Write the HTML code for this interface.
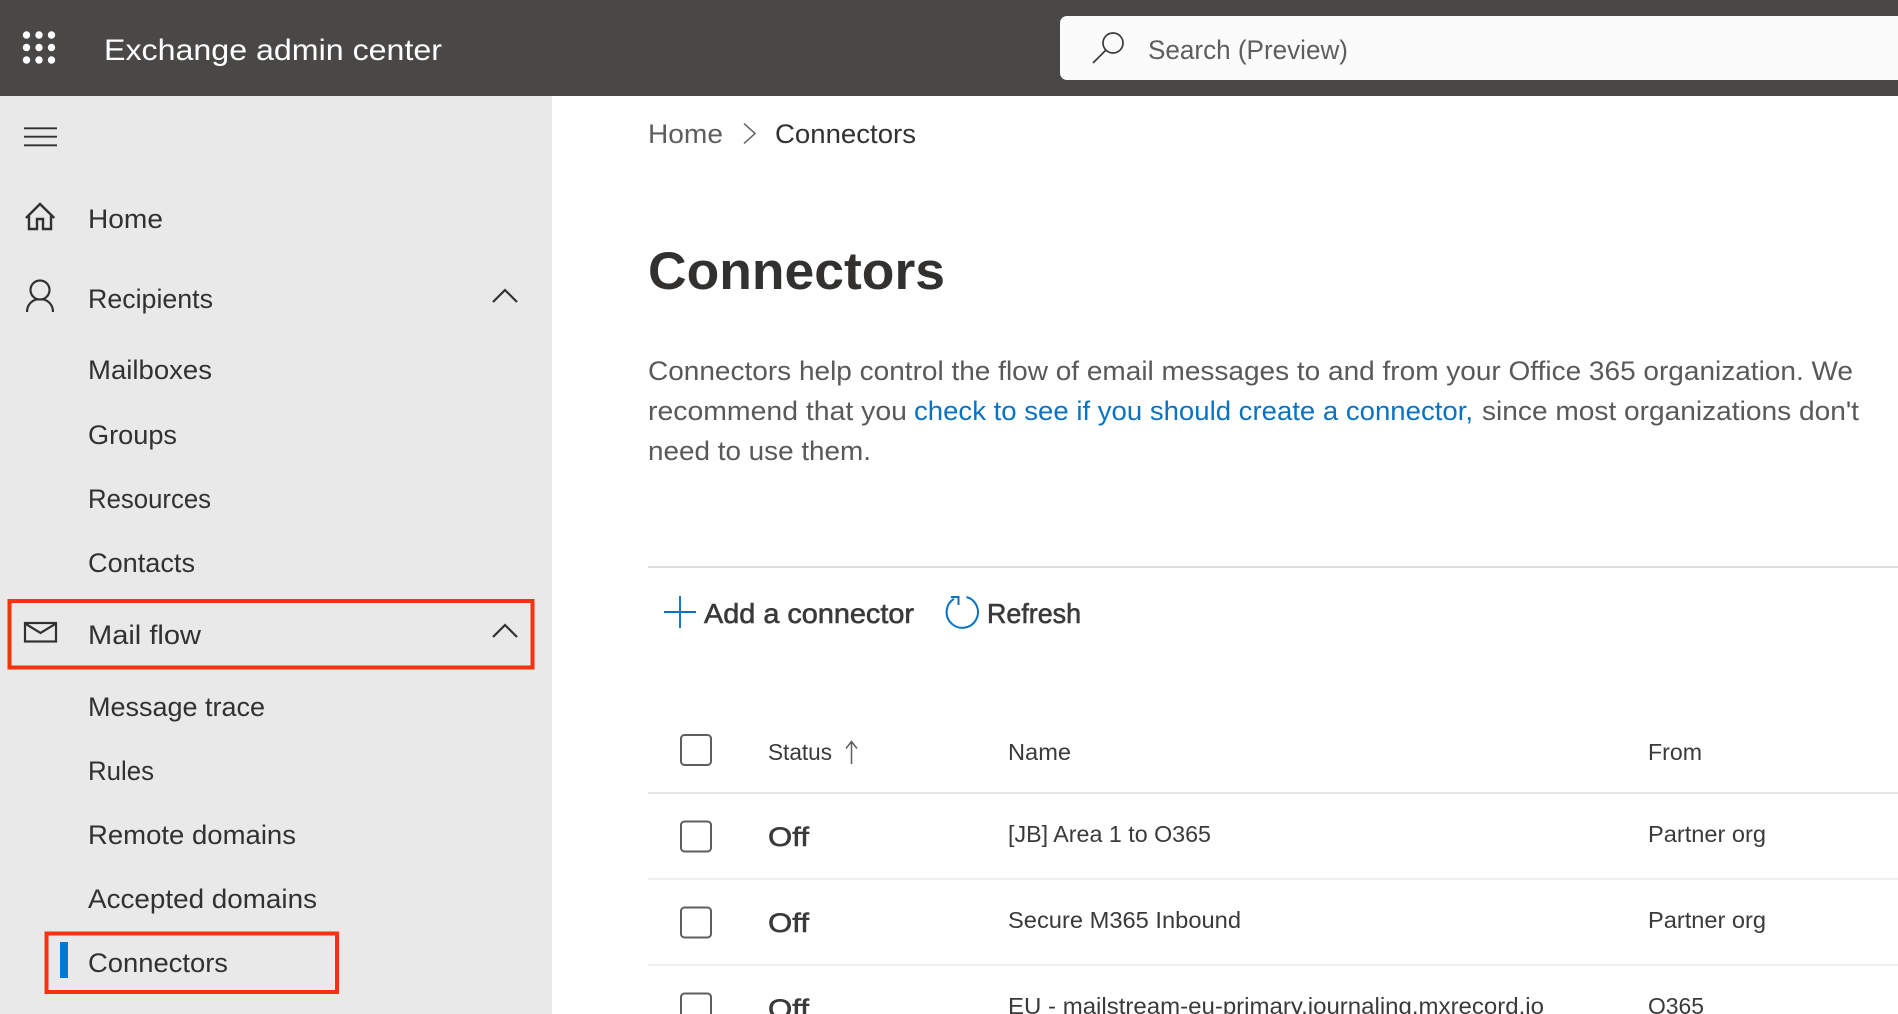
<!DOCTYPE html>
<html lang="en">
<head>
<meta charset="utf-8">
<title>Exchange admin center</title>
<style>
html,body{margin:0;padding:0;background:#fff;width:1898px;height:1014px;overflow:hidden}
svg{display:block;position:absolute;left:0;top:0;filter:blur(0.35px)}
text{font-family:"Liberation Sans",sans-serif;fill:#323130}
.nav{font-size:26.5px}
.p{font-size:26.5px;fill:#5a5958}
.t{font-size:23.5px;fill:#3b3a39}
.off{font-size:27px;fill:#3b3a39;stroke:#3b3a39;stroke-width:.55px}
.sb{font-size:27.5px;fill:#3b3a39;stroke:#3b3a39;stroke-width:.6px}
.ico{fill:none;stroke:#323130;stroke-width:2.2}
.cb{fill:#fff;stroke:#605e5c;stroke-width:2}
.red{fill:none;stroke:#f5330e;stroke-width:4}
</style>
</head>
<body>
<svg width="1898" height="1014" viewBox="0 0 1898 1014" xmlns="http://www.w3.org/2000/svg">
<rect width="1898" height="1014" fill="#fff"/>
<!-- header -->
<rect width="1898" height="96" fill="#494846"/>
<g fill="#fff">
<circle cx="26.5" cy="35" r="3.7"/><circle cx="39" cy="35" r="3.7"/><circle cx="51.5" cy="35" r="3.7"/>
<circle cx="26.5" cy="47.5" r="3.7"/><circle cx="39" cy="47.5" r="3.7"/><circle cx="51.5" cy="47.5" r="3.7"/>
<circle cx="26.5" cy="60" r="3.7"/><circle cx="39" cy="60" r="3.7"/><circle cx="51.5" cy="60" r="3.7"/>
</g>
<text x="104" y="60" font-size="30" textLength="338" lengthAdjust="spacingAndGlyphs" style="fill:#fff">Exchange admin center</text>
<rect x="1060" y="16" width="860" height="64" rx="7" fill="#fbfbfb"/>
<g fill="none" stroke="#3b3a39" stroke-width="1.7"><circle cx="1113" cy="43" r="10"/><path d="M1106 50L1093 63"/></g>
<text x="1148" y="59" font-size="26.500" textLength="200" lengthAdjust="spacingAndGlyphs" style="fill:#5f5e5d">Search (Preview)</text>
<!-- sidebar -->
<rect x="0" y="96" width="552" height="918" fill="#e9e9e9"/>
<path d="M24 128.300H57M24 136.700H57M24 145.300H57" stroke="#323130" stroke-width="1.800"/>
<path class="ico" style="stroke-width:2.400" d="M29 214V229H37V219H43V229H51V214M26 218L40 204L54.300 218"/>
<g class="ico"><path d="M27 312C27 304 33 299 40 299C47 299 53 304 53 312"/><circle cx="40" cy="290" r="9.500" fill="#e9e9e9"/></g>
<path class="ico" d="M493 302L505 290L517 302"/>
<path class="ico" d="M493 637L505 625L517 637"/>
<g class="ico"><rect x="25" y="623" width="31" height="18.500"/><path d="M25 623.500L40.500 633L56 623.500"/></g>
<text class="nav" x="88" y="228" textLength="75" lengthAdjust="spacingAndGlyphs">Home</text>
<text class="nav" x="88" y="308" textLength="125" lengthAdjust="spacingAndGlyphs">Recipients</text>
<text class="nav" x="88" y="379" textLength="124" lengthAdjust="spacingAndGlyphs">Mailboxes</text>
<text class="nav" x="88" y="444" textLength="89" lengthAdjust="spacingAndGlyphs">Groups</text>
<text class="nav" x="88" y="508" textLength="123" lengthAdjust="spacingAndGlyphs">Resources</text>
<text class="nav" x="88" y="572" textLength="107" lengthAdjust="spacingAndGlyphs">Contacts</text>
<text class="nav" x="88" y="644" textLength="113" lengthAdjust="spacingAndGlyphs">Mail flow</text>
<text class="nav" x="88" y="716" textLength="177" lengthAdjust="spacingAndGlyphs">Message trace</text>
<text class="nav" x="88" y="780" textLength="66" lengthAdjust="spacingAndGlyphs">Rules</text>
<text class="nav" x="88" y="844" textLength="208" lengthAdjust="spacingAndGlyphs">Remote domains</text>
<text class="nav" x="88" y="908" textLength="229" lengthAdjust="spacingAndGlyphs">Accepted domains</text>
<text class="nav" x="88" y="972" textLength="140" lengthAdjust="spacingAndGlyphs">Connectors</text>
<rect x="60" y="942" width="8" height="36" fill="#0078d4"/>
<rect class="red" x="9.500" y="601" width="523" height="66.500"/>
<rect class="red" x="46.500" y="933.500" width="290.500" height="58.500"/>
<!-- breadcrumb -->
<text x="648" y="143" font-size="27" textLength="75" lengthAdjust="spacingAndGlyphs" style="fill:#605e5c">Home</text>
<path d="M744 123.500L755 133.500L744 143.500" fill="none" stroke="#605e5c" stroke-width="1.500"/>
<text x="775" y="143" font-size="27" textLength="141" lengthAdjust="spacingAndGlyphs">Connectors</text>
<text x="648" y="289" font-size="53" font-weight="bold" textLength="297" lengthAdjust="spacingAndGlyphs">Connectors</text>
<!-- paragraph -->
<text class="p" x="648" y="380" textLength="1205" lengthAdjust="spacingAndGlyphs">Connectors help control the flow of email messages to and from your Office 365 organization. We</text>
<text class="p" x="648" y="420" textLength="259" lengthAdjust="spacingAndGlyphs">recommend that you</text>
<text class="p" x="914" y="420" textLength="559" lengthAdjust="spacingAndGlyphs" style="fill:#0a72c2">check to see if you should create a connector,</text>
<text class="p" x="1482" y="420" textLength="377" lengthAdjust="spacingAndGlyphs">since most organizations don't</text>
<text class="p" x="648" y="460" textLength="223" lengthAdjust="spacingAndGlyphs">need to use them.</text>
<line x1="648" y1="567" x2="1898" y2="567" stroke="#dedede" stroke-width="2"/>
<!-- toolbar -->
<path d="M664 612H696M680 596V628" stroke="#0a72c2" stroke-width="1.900" fill="none"/>
<text class="sb" x="704" y="623" textLength="210" lengthAdjust="spacingAndGlyphs">Add a connector</text>
<path d="M966.500 597A15.700 15.700 0 1 1 954 598.800" fill="none" stroke="#0a72c2" stroke-width="2"/>
<path d="M951 597H958.500V605" fill="none" stroke="#0a72c2" stroke-width="2"/>
<text class="sb" x="987" y="623" textLength="94" lengthAdjust="spacingAndGlyphs">Refresh</text>
<!-- table -->
<rect class="cb" x="681" y="735" width="30" height="30" rx="3.500"/>
<text class="t" x="768" y="760" textLength="64" lengthAdjust="spacingAndGlyphs">Status</text>
<path d="M851.500 764V742M846 748.500L851.500 741.500L857 748.500" fill="none" stroke="#605e5c" stroke-width="1.500"/>
<text class="t" x="1008" y="760" textLength="63" lengthAdjust="spacingAndGlyphs">Name</text>
<text class="t" x="1648" y="760" textLength="54" lengthAdjust="spacingAndGlyphs">From</text>
<line x1="648" y1="793" x2="1898" y2="793" stroke="#e6e6e6" stroke-width="2"/>
<rect class="cb" x="681" y="821.500" width="30" height="30" rx="3.500"/>
<text class="off" x="768" y="846" textLength="41" lengthAdjust="spacingAndGlyphs">Off</text>
<text class="t" x="1008" y="842" textLength="203" lengthAdjust="spacingAndGlyphs">[JB] Area 1 to O365</text>
<text class="t" x="1648" y="842" textLength="118" lengthAdjust="spacingAndGlyphs">Partner org</text>
<line x1="648" y1="879" x2="1898" y2="879" stroke="#efefef" stroke-width="2"/>
<rect class="cb" x="681" y="907.500" width="30" height="30" rx="3.500"/>
<text class="off" x="768" y="932" textLength="41" lengthAdjust="spacingAndGlyphs">Off</text>
<text class="t" x="1008" y="928" textLength="233" lengthAdjust="spacingAndGlyphs">Secure M365 Inbound</text>
<text class="t" x="1648" y="928" textLength="118" lengthAdjust="spacingAndGlyphs">Partner org</text>
<line x1="648" y1="965" x2="1898" y2="965" stroke="#efefef" stroke-width="2"/>
<rect class="cb" x="681" y="993.500" width="30" height="30" rx="3.500"/>
<text class="off" x="768" y="1018" textLength="41" lengthAdjust="spacingAndGlyphs">Off</text>
<text class="t" x="1008" y="1014" textLength="536" lengthAdjust="spacingAndGlyphs">EU - mailstream-eu-primary.journaling.mxrecord.io</text>
<text class="t" x="1648" y="1014" textLength="56" lengthAdjust="spacingAndGlyphs">O365</text>
</svg>
</body>
</html>
